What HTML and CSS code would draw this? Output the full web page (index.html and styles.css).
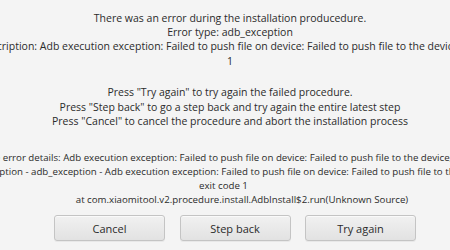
FILE: index.html
```html
<!DOCTYPE html>
<html>
<head>
<meta charset="utf-8">
<link rel="stylesheet" href="styles.css">
</head>
<body>
<div class="dialog">
  <div class="messages">
    <div class="block">
      <div class="line">There was an error during the installation producedure.</div>
      <div class="line">Error type: adb_exception</div>
      <div class="line">Error description: Adb execution exception: Failed to push file on device: Failed to push file to the device, exit code</div>
      <div class="line">1</div>
    </div>
    <div class="block gap-a">
      <div class="line">Press "Try again" to try again the failed procedure.</div>
      <div class="line">Press "Step back" to go a step back and try again the entire latest step</div>
      <div class="line">Press "Cancel" to cancel the procedure and abort the installation process</div>
    </div>
    <div class="block details">
      <div class="line">Complete error details: Adb execution exception: Failed to push file on device: Failed to push file to the device, exit code 1</div>
      <div class="line pad-m">Adb exception - adb_exception - Adb execution exception: Failed to push file on device: Failed to push file to the device,</div>
      <div class="line trail">exit code 1</div>
      <div class="line tab">at com.xiaomitool.v2.procedure.install.AdbInstall$2.run(Unknown Source)</div>
      <div class="line tab">at java.lang.Thread.run(Unknown Source)</div>
    </div>
  </div>
  <div class="buttons">
    <button class="btn">Cancel</button>
    <button class="btn">Step back</button>
    <button class="btn">Try again</button>
  </div>
</div>
</body>
</html>
```
FILE: styles.css
```css
html, body {
  margin: 0;
  padding: 0;
}
body {
  width: 450px;
  height: 250px;
  overflow: hidden;
  background: #f4f4f4;
  color: #2b2b2b;
  font-family: "Open Sans", "Noto Sans", "DejaVu Sans", sans-serif;
  font-size: 10.5px;
}
.dialog {
  width: 460px;
  display: flex;
  flex-direction: column;
}
.messages {
  height: 210px;
  overflow: hidden;
  padding-top: 10.5px;
  box-sizing: border-box;
}
.block {
  display: flex;
  flex-direction: column;
  align-items: center;
  line-height: 14.4px;
}
.line {
  white-space: nowrap;
}
.gap-a {
  margin-top: 17px;
}
.details {
  margin-top: 23px;
  font-size: 9.7px;
  line-height: 14px;
}
.pad-m {
  padding-right: 8px;
}
.trail {
  padding-right: 13px;
}
.tab {
  padding-left: 24px;
}
.buttons {
  display: flex;
  gap: 14.5px;
  padding-left: 54px;
  margin-top: 5px;
}
.btn {
  width: 111px;
  height: 26px;
  box-sizing: border-box;
  border: 1px solid #c4c4c4;
  border-radius: 3px;
  background: linear-gradient(#f1f1f1, #e2e2e2);
  box-shadow: inset 0 1px 0 #fafafa, 0 1px 0 #e8e8e8;
  font-family: inherit;
  font-size: 11px;
  color: #2b2b2b;
  padding: 0;
}
```
